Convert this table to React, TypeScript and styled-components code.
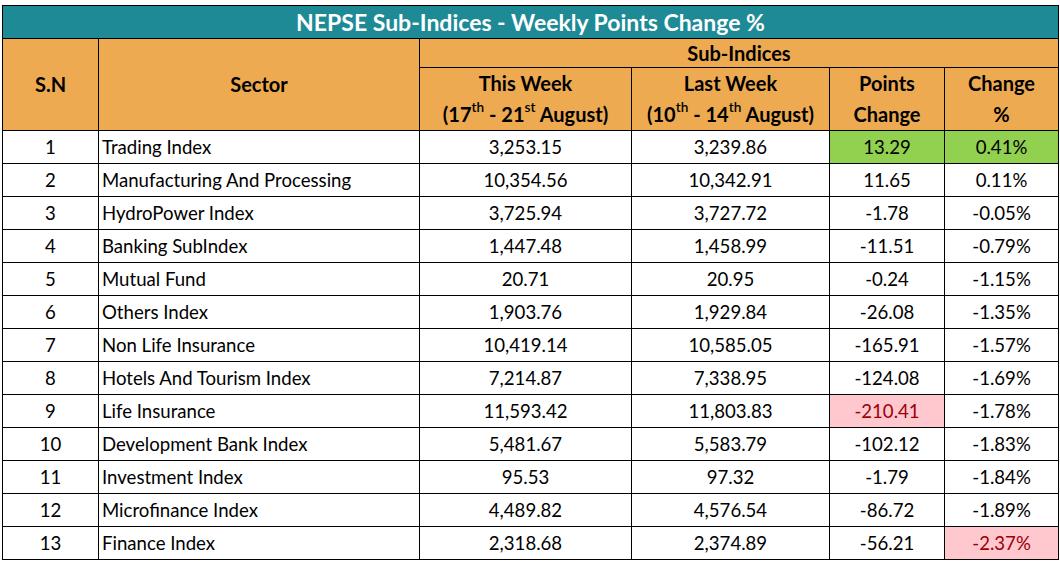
import styled, { createGlobalStyle } from 'styled-components';

const GlobalStyle = createGlobalStyle`
  html, body {
    margin: 0;
    padding: 0;
    background: #ffffff;
  }
  body {
    font-family: Lato, "Open Sans", "Liberation Sans", sans-serif;
  }
`;

type Tone = 'none' | 'green' | 'red';

interface Row {
  sn: number;
  sector: string;
  thisWeek: string;
  lastWeek: string;
  points: string;
  change: string;
  pointsTone?: Tone;
  changeTone?: Tone;
}

const rows: Row[] = [
  { sn: 1, sector: 'Trading Index', thisWeek: '3,253.15', lastWeek: '3,239.86', points: '13.29', change: '0.41%', pointsTone: 'green', changeTone: 'green' },
  { sn: 2, sector: 'Manufacturing And Processing', thisWeek: '10,354.56', lastWeek: '10,342.91', points: '11.65', change: '0.11%' },
  { sn: 3, sector: 'HydroPower Index', thisWeek: '3,725.94', lastWeek: '3,727.72', points: '-1.78', change: '-0.05%' },
  { sn: 4, sector: 'Banking SubIndex', thisWeek: '1,447.48', lastWeek: '1,458.99', points: '-11.51', change: '-0.79%' },
  { sn: 5, sector: 'Mutual Fund', thisWeek: '20.71', lastWeek: '20.95', points: '-0.24', change: '-1.15%' },
  { sn: 6, sector: 'Others Index', thisWeek: '1,903.76', lastWeek: '1,929.84', points: '-26.08', change: '-1.35%' },
  { sn: 7, sector: 'Non Life Insurance', thisWeek: '10,419.14', lastWeek: '10,585.05', points: '-165.91', change: '-1.57%' },
  { sn: 8, sector: 'Hotels And Tourism Index', thisWeek: '7,214.87', lastWeek: '7,338.95', points: '-124.08', change: '-1.69%' },
  { sn: 9, sector: 'Life Insurance', thisWeek: '11,593.42', lastWeek: '11,803.83', points: '-210.41', change: '-1.78%', pointsTone: 'red' },
  { sn: 10, sector: 'Development Bank Index', thisWeek: '5,481.67', lastWeek: '5,583.79', points: '-102.12', change: '-1.83%' },
  { sn: 11, sector: 'Investment Index', thisWeek: '95.53', lastWeek: '97.32', points: '-1.79', change: '-1.84%' },
  { sn: 12, sector: 'Microfinance Index', thisWeek: '4,489.82', lastWeek: '4,576.54', points: '-86.72', change: '-1.89%' },
  { sn: 13, sector: 'Finance Index', thisWeek: '2,318.68', lastWeek: '2,374.89', points: '-56.21', change: '-2.37%', changeTone: 'red' },
];

const App = () => {
  return (
    <>
      <GlobalStyle />
      <Page>
        <Sheet>
          <colgroup>
            <col style={{ width: 96 }} />
            <col style={{ width: 321 }} />
            <col style={{ width: 212 }} />
            <col style={{ width: 198 }} />
            <col style={{ width: 115 }} />
            <col style={{ width: 114 }} />
          </colgroup>
          <thead>
            <tr>
              <TitleCell colSpan={6}>NEPSE Sub-Indices - Weekly Points Change %</TitleCell>
            </tr>
            <tr>
              <HeadCell rowSpan={2}>S.N</HeadCell>
              <HeadCell rowSpan={2}>Sector</HeadCell>
              <GroupCell colSpan={4}>Sub-Indices</GroupCell>
            </tr>
            <tr>
              <HeadCell>
                This Week
                <br />
                (17<sup>th</sup> - 21<sup>st</sup> August)
              </HeadCell>
              <HeadCell>
                Last Week
                <br />
                (10<sup>th</sup> - 14<sup>th</sup> August)
              </HeadCell>
              <HeadCell>
                Points
                <br />
                Change
              </HeadCell>
              <HeadCell>
                Change
                <br />%
              </HeadCell>
            </tr>
          </thead>
          <tbody>
            {rows.map((row) => (
              <tr key={row.sn}>
                <Cell>{row.sn}</Cell>
                <SectorCell>{row.sector}</SectorCell>
                <Cell>{row.thisWeek}</Cell>
                <Cell>{row.lastWeek}</Cell>
                <Cell $tone={row.pointsTone}>{row.points}</Cell>
                <Cell $tone={row.changeTone}>{row.change}</Cell>
              </tr>
            ))}
          </tbody>
        </Sheet>
      </Page>
    </>
  );
};

export default App;

const Page = styled.div`
  padding: 5px 3px 0 2px;
`;

const Sheet = styled.table`
  border-collapse: collapse;
  table-layout: fixed;
  width: 1056px;
  color: #000000;

  sup {
    font-size: 0.68em;
    font-weight: 600;
    line-height: 0;
    vertical-align: 0.7em;
  }
`;

const TitleCell = styled.th`
  height: 32px;
  padding: 0;
  background: #1e8a96;
  color: #ffffff;
  font-size: 23px;
  font-weight: 700;
  text-align: center;
  border: 1px solid #000000;
`;

const HeadCell = styled.th`
  padding: 0;
  background: #edaa50;
  font-size: 20px;
  font-weight: 700;
  line-height: 31px;
  text-align: center;
  vertical-align: middle;
  border: 1px solid #000000;
`;

const GroupCell = styled(HeadCell)`
  height: 28px;
  line-height: 26px;
`;

const toneBg: Record<Tone, string> = {
  none: 'transparent',
  green: '#92d050',
  red: '#ffc7ce',
};

const toneFg: Record<Tone, string> = {
  none: '#000000',
  green: '#000000',
  red: '#9c0006',
};

const Cell = styled.td<{ $tone?: Tone }>`
  height: 32px;
  padding: 0;
  font-size: 18.6px;
  text-align: center;
  vertical-align: middle;
  border: 1px solid #000000;
  background: ${({ $tone = 'none' }) => toneBg[$tone]};
  color: ${({ $tone = 'none' }) => toneFg[$tone]};
`;

const SectorCell = styled(Cell)`
  text-align: left;
  padding-left: 3px;
`;
